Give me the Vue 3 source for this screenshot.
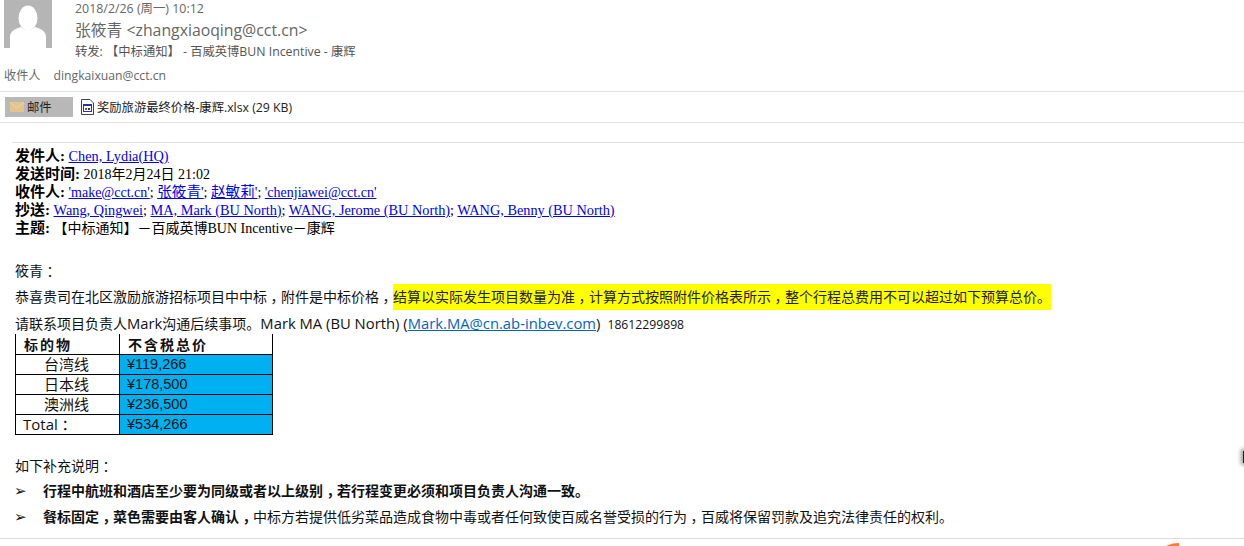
<template>
  <div class="mail">
    <div class="head">
      <div class="avatar">
        <svg width="48" height="48" viewBox="0 0 48 48">
          <rect width="48" height="48" fill="#b5b5b5" />
          <ellipse cx="24" cy="18" rx="9.5" ry="12.5" fill="#fff" />
          <path d="M6 48 V37 C6 31 11 29 17 27 C20 31 28 31 31 27 C37 29 42 31 42 37 V48 Z" fill="#fff" />
        </svg>
      </div>
      <div class="headText">
        <div class="date">2018/2/26 (周一) 10:12</div>
        <div class="sender">张筱青 &lt;zhangxiaoqing@cct.cn&gt;</div>
        <div class="subject">转发: 【中标通知】 - 百威英博BUN Incentive - 康辉</div>
      </div>
    </div>
    <div class="toRow"><span>收件人</span><span>dingkaixuan@cct.cn</span></div>
    <div class="attachments">
      <div class="mailTab">
        <svg width="14" height="10" viewBox="0 0 14 10">
          <rect width="14" height="10" fill="#e3c48a" />
          <path d="M0 .5 L7 6 L14 .5" fill="none" stroke="#edd5a6" stroke-width="1" />
        </svg>
        <span>邮件</span>
      </div>
      <div class="file">
        <svg width="14" height="16" viewBox="0 0 14 16">
          <path d="M.5 .5 H9 L12.5 4 V15.5 H.5 Z" fill="#fff" stroke="#444" />
          <rect x="2" y="5" width="9" height="8" fill="#24388c" />
          <rect x="3" y="7" width="7" height="5" fill="#fff" />
          <rect x="4" y="9" width="2" height="2" fill="#c23a3a" />
          <rect x="7" y="9" width="2" height="2" fill="#24388c" />
        </svg>
        <span>奖励旅游最终价格-康辉.xlsx (29 KB)</span>
      </div>
    </div>
    <div class="body">
      <div class="quoteHead">
        <div class="wide"><b>发件人:</b> <a>Chen, Lydia(HQ)</a></div>
        <div><b>发送时间:</b> 2018年2月24日 21:02</div>
        <div><b>收件人:</b> <a>'make@cct.cn'</a>; <a class="cj">张筱青'</a>; <a class="cj">赵敏莉'</a>; <a>'chenjiawei@cct.cn'</a></div>
        <div class="wide"><b>抄送:</b> <a>Wang, Qingwei</a>; <a>MA, Mark (BU North)</a>; <a>WANG, Jerome (BU North)</a>; <a>WANG, Benny (BU North)</a></div>
        <div><b>主题:</b> 【中标通知】－百威英博BUN Incentive－康辉</div>
      </div>
      <p class="greet">筱青<i>：</i></p>
      <p class="para">恭喜贵司在北区激励旅游招标项目中中标<i>，</i>附件是中标价格<i>，</i><mark>结算以实际发生项目数量为准<i>，</i>计算方式按照附件价格表所示<i>，</i>整个行程总费用不可以超过如下预算总价。</mark></p>
      <p class="contact">请联系项目负责人<span class="latin">Mark</span>沟通后续事项。<span class="latin">Mark MA (BU North) (<a class="mailLink">Mark.MA@cn.ab-inbev.com</a>)</span><span class="phone">18612299898</span></p>
      <table class="price">
        <tbody>
          <tr class="titleRow"><th class="nameHead">标的物</th><th class="priceHead">不含税总价</th></tr>
          <tr v-for="row in rows" :key="row.name">
            <td :class="row.total ? 'totalCell' : 'nameCell'">{{ row.name }}<i v-if="row.total">：</i></td>
            <td class="amount">{{ row.price }}</td>
          </tr>
        </tbody>
      </table>
      <p class="notes">如下补充说明<i>：</i></p>
      <div class="bullet"><span class="arrow">➢</span><span><b>行程中航班和酒店至少要为同级或者以上级别<i>，</i>若行程变更必须和项目负责人沟通一致。</b></span></div>
      <div class="bullet"><span class="arrow">➢</span><span><b>餐标固定<i>，</i>菜色需要由客人确认<i>，</i></b>中标方若提供低劣菜品造成食物中毒或者任何致使百威名誉受损的行为<i>，</i>百威将保留罚款及追究法律责任的权利。</span></div>
    </div>
    <div class="footer"><div class="orange"></div></div>
    <div class="edgeMark"></div>
  </div>
</template>

<script setup>
const rows = [
  { name: "台湾线", price: "¥119,266" },
  { name: "日本线", price: "¥178,500" },
  { name: "澳洲线", price: "¥236,500" },
  { name: "Total", price: "¥534,266", total: true },
];
</script>

<style>
html,
body {
  margin: 0;
  background: #fff;
  overflow: hidden;
}
</style>

<style scoped>
.mail {
  position: relative;
  width: 1244px;
  height: 546px;
  overflow: hidden;
  color: #111;
  font-family: "Open Sans", "Noto Sans CJK SC", sans-serif;
}
.head {
  display: flex;
  height: 66px;
  padding-left: 4px;
}
.avatar {
  width: 48px;
  height: 48px;
}
.headText {
  margin-left: 23px;
  color: #666;
}
.date {
  font-size: 12.4px;
  line-height: 17px;
}
.sender {
  font-size: 15.8px;
  line-height: 26px;
}
.subject {
  font-size: 12.3px;
  line-height: 18px;
  color: #555;
}
.toRow {
  display: flex;
  gap: 13px;
  padding-left: 4px;
  padding-top: 1px;
  height: 24px;
  border-bottom: 1px solid #e1e1e1;
  font-size: 12.2px;
  line-height: 18px;
  color: #666;
}
.attachments {
  display: flex;
  align-items: center;
  height: 30px;
  border-bottom: 1px solid #e1e1e1;
  font-size: 12.3px;
}
.mailTab {
  display: flex;
  align-items: center;
  gap: 3px;
  width: 68px;
  height: 20px;
  margin-left: 5px;
  padding-left: 5px;
  box-sizing: border-box;
  background: #b8b8b8;
  color: #222;
}
.file {
  display: flex;
  align-items: center;
  gap: 2px;
  margin-left: 8px;
  color: #222;
}
.body {
  box-sizing: border-box;
  height: 396px;
  margin-top: 19px;
  padding-top: 4px;
  border-top: 1px solid #e1e1e1;
  margin-left: 12px;
  padding-left: 3px;
}
.quoteHead {
  font-family: "Liberation Serif", "Noto Sans CJK SC", serif;
  font-size: 14px;
  line-height: 18px;
  color: #000;
}
.quoteHead > div {
  height: 18px;
}
.quoteHead b {
  font-size: 15px;
}
.quoteHead a {
  color: #0000ee;
  text-decoration: underline;
}
.quoteHead .wide {
  font-size: 14.3px;
}
.quoteHead .cj {
  font-size: 14.6px;
}
p {
  margin: 0;
  font-size: 14px;
}
i {
  font-style: normal;
  font-feature-settings: "halt" 1;
  padding: 0 0.25em;
}
.greet {
  height: 26px;
  margin-top: 21px;
  line-height: 26px;
}
.para {
  height: 26px;
  line-height: 26px;
}
mark {
  display: inline-block;
  background: #ffff00;
  color: #222;
}
.contact {
  height: 24px;
  line-height: 26px;
}
.latin {
  font-size: 14.8px;
}
.mailLink {
  color: #0563c1;
  text-decoration: underline;
}
.phone {
  margin-left: 7px;
  font-size: 12.2px;
}
.price {
  border-collapse: collapse;
  width: 258px;
  table-layout: fixed;
  font-size: 15px;
  color: #111;
}
.price th,
.price td {
  height: 19px;
  padding: 0;
  border: 1px solid #000;
  line-height: 19px;
  text-align: left;
}
.titleRow th {
  height: 20px;
  border-top: 0;
  padding-left: 8px;
  font-size: 14px;
  font-family: "Noto Sans CJK SC", sans-serif;
  letter-spacing: 2px;
}
.nameHead {
  width: 95px;
}
.nameCell {
  padding-left: 28px !important;
}
.totalCell {
  padding-left: 7px !important;
}
.amount {
  padding-left: 7px !important;
  background: #00b0f0;
  font-family: "Liberation Sans", sans-serif;
  font-size: 14.5px;
}
.notes {
  height: 26px;
  margin-top: 18px;
  line-height: 26px;
}
.bullet {
  display: flex;
  height: 26px;
  margin-top: -1px;
  margin-bottom: 1px;
  font-size: 14px;
  line-height: 26px;
}
.arrow {
  width: 29px;
  margin-left: -1px;
  font-size: 15px;
  font-weight: 700;
  font-family: "DejaVu Sans", sans-serif;
}
.footer {
  position: relative;
  height: 7px;
  border-top: 1px solid #dcdcdc;
  overflow: hidden;
}
.orange {
  position: absolute;
  left: 1163px;
  top: 4px;
  width: 16px;
  height: 8px;
  background: #ff7a3c;
  border-radius: 100% 0 0 0;
}
.edgeMark {
  position: absolute;
  right: -1px;
  top: 451px;
  width: 2px;
  height: 12px;
  background: #222;
  box-shadow: 0 0 4px 2px rgba(0, 0, 0, 0.4);
}
</style>
